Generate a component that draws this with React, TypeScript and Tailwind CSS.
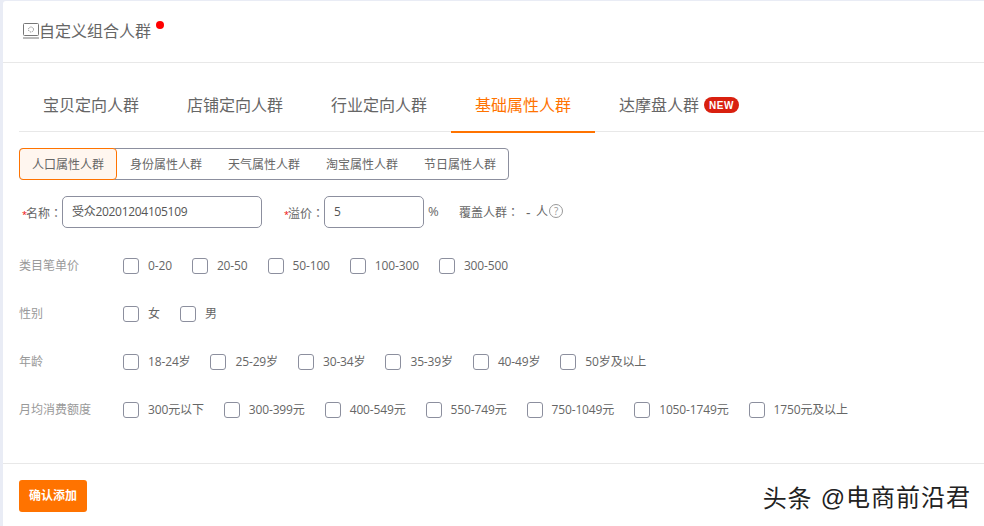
const tabs = ["宝贝定向人群", "店铺定向人群", "行业定向人群", "基础属性人群"];
const subTabs = ["人口属性人群", "身份属性人群", "天气属性人群", "淘宝属性人群", "节日属性人群"];
const rows = [
  { label: "类目笔单价", items: ["0-20", "20-50", "50-100", "100-300", "300-500"] },
  { label: "性别", items: ["女", "男"] },
  { label: "年龄", items: ["18-24岁", "25-29岁", "30-34岁", "35-39岁", "40-49岁", "50岁及以上"] },
  {
    label: "月均消费额度",
    items: ["300元以下", "300-399元", "400-549元", "550-749元", "750-1049元", "1050-1749元", "1750元及以上"],
  },
];

const Colon = () => <span className="font-['Noto_Sans_CJK_TC',sans-serif]">：</span>;

const Required = ({ text }: { text: string }) => (
  <span className="whitespace-nowrap text-[12px] text-[#666]">
    <span className="inline-block w-1 text-[9px] text-[#e00]">*</span>
    {text}
    <Colon />
  </span>
);

const App = () => {
  return (
    <div className="h-[526px] w-[984px] overflow-hidden bg-[#e9ecf5] pl-[3px] pt-px font-['Open_Sans','Noto_Sans_CJK_SC',sans-serif]">
      <div className="relative h-[525px] rounded-tl-[3px] bg-white">
        <div className="flex h-[62px] items-center border-b border-[#e8e8e8] pb-[2px] pl-5 text-[16px] text-[#666]">
          <svg width="16" height="16" viewBox="0 0 16 16" fill="none" stroke="#777" strokeWidth="1">
            <rect x="0.5" y="0.5" width="15" height="12" rx="1" />
            <circle cx="8" cy="6.5" r="2.5" strokeDasharray="1 1" />
            <path d="M0 15h16" />
          </svg>
          <span>自定义组合人群</span>
          <span className="mb-3 ml-[5px] size-2 rounded-full bg-[#f00]" />
        </div>

        <div className="ml-4 mt-[21px] flex h-[48px] border-b border-[#e8e8e8]">
          {tabs.map((tab, i) => (
            <div
              key={tab}
              className={
                i === 3
                  ? "h-[49px] w-[144px] border-b-2 border-[#ff7300] pt-[9px] text-center text-[16px] text-[#ff7300]"
                  : "h-[48px] w-[144px] pt-[9px] text-center text-[16px] text-[#666]"
              }
            >
              {tab}
            </div>
          ))}
          <div className="flex h-[48px] items-start pl-6 pt-[9px] text-[16px] text-[#666]">
            达摩盘人群
            <span className="ml-[5px] mt-[4px] flex h-4 w-[35px] items-center justify-center rounded-full bg-[#d9200f] font-['Liberation_Sans',sans-serif] text-[10px] font-bold tracking-[0.5px] text-white">
              NEW
            </span>
          </div>
        </div>

        <div className="ml-4 mt-[16px] flex h-8 w-[490px] rounded border border-[#8c8f9e]">
          {subTabs.map((tab, i) => (
            <div
              key={tab}
              className={
                i === 0
                  ? "-my-px -ml-px flex h-8 w-[98px] shrink-0 items-center justify-center rounded border border-[#ff7300] bg-[#fff6ef] pt-[2px] text-[12px] text-[#666]"
                  : "flex w-[98px] shrink-0 items-center justify-center pt-[2px] text-[12px] text-[#666]"
              }
            >
              {tab}
            </div>
          ))}
        </div>

        <div className="mt-4 flex h-8 items-center">
          <div className="ml-[19px] w-10">
            <Required text="名称" />
          </div>
          <div className="flex h-8 w-[200px] items-center rounded-[5px] border border-[#8c8f9e] pl-[9px] text-[12px] tracking-[-0.3px] text-[#555]">
            受众20201204105109
          </div>
          <div className="ml-[22px] w-10">
            <Required text="溢价" />
          </div>
          <div className="flex h-8 w-[100px] items-center rounded-[5px] border border-[#8c8f9e] pl-[9px] text-[12px] text-[#555]">
            5
          </div>
          <span className="ml-1 w-3 text-[13px] text-[#666]">%</span>
          <span className="ml-[19px] text-[12px] text-[#666]">
            覆盖人群
            <Colon />
          </span>
          <span className="ml-[7px] w-1 text-[14px] text-[#666]">-</span>
          <span className="ml-[6px] text-[12px] text-[#666]">人</span>
          <span className="ml-px mb-[2px] flex size-[14px] items-center justify-center rounded-full border border-[#999] text-[10px] leading-none text-[#999]">
            ?
          </span>
        </div>

        <div className="mt-[30px] flex flex-col gap-8">
          {rows.map((row) => (
            <div key={row.label} className="flex h-4 items-center pl-4">
              <div className="w-[104px] shrink-0 text-[12px] text-[#999]">{row.label}</div>
              <div className="flex gap-5">
                {row.items.map((item) => (
                  <label key={item} className="flex items-center gap-[9px] text-[12px] tracking-[-0.14px] text-[#666]">
                    <span className="size-4 rounded-[3px] border border-[#8c8f9e]" />
                    {item}
                  </label>
                ))}
              </div>
            </div>
          ))}
        </div>

        <div className="mt-[45px] border-t border-[#e8e8e8] pl-4 pt-4">
          <button className="h-8 w-[68px] rounded-[3px] bg-[#ff7300] text-[12px] font-bold text-white">确认添加</button>
        </div>

        <div className="absolute bottom-[12px] right-[13px] flex items-center gap-2 whitespace-nowrap text-[24px] leading-8 tracking-[1px] text-[#222]">
          <span>头条</span>
          <span>
            <span className="font-['Liberation_Sans',sans-serif]">@</span>电商前沿君
          </span>
        </div>
      </div>
    </div>
  );
};

export default App;
